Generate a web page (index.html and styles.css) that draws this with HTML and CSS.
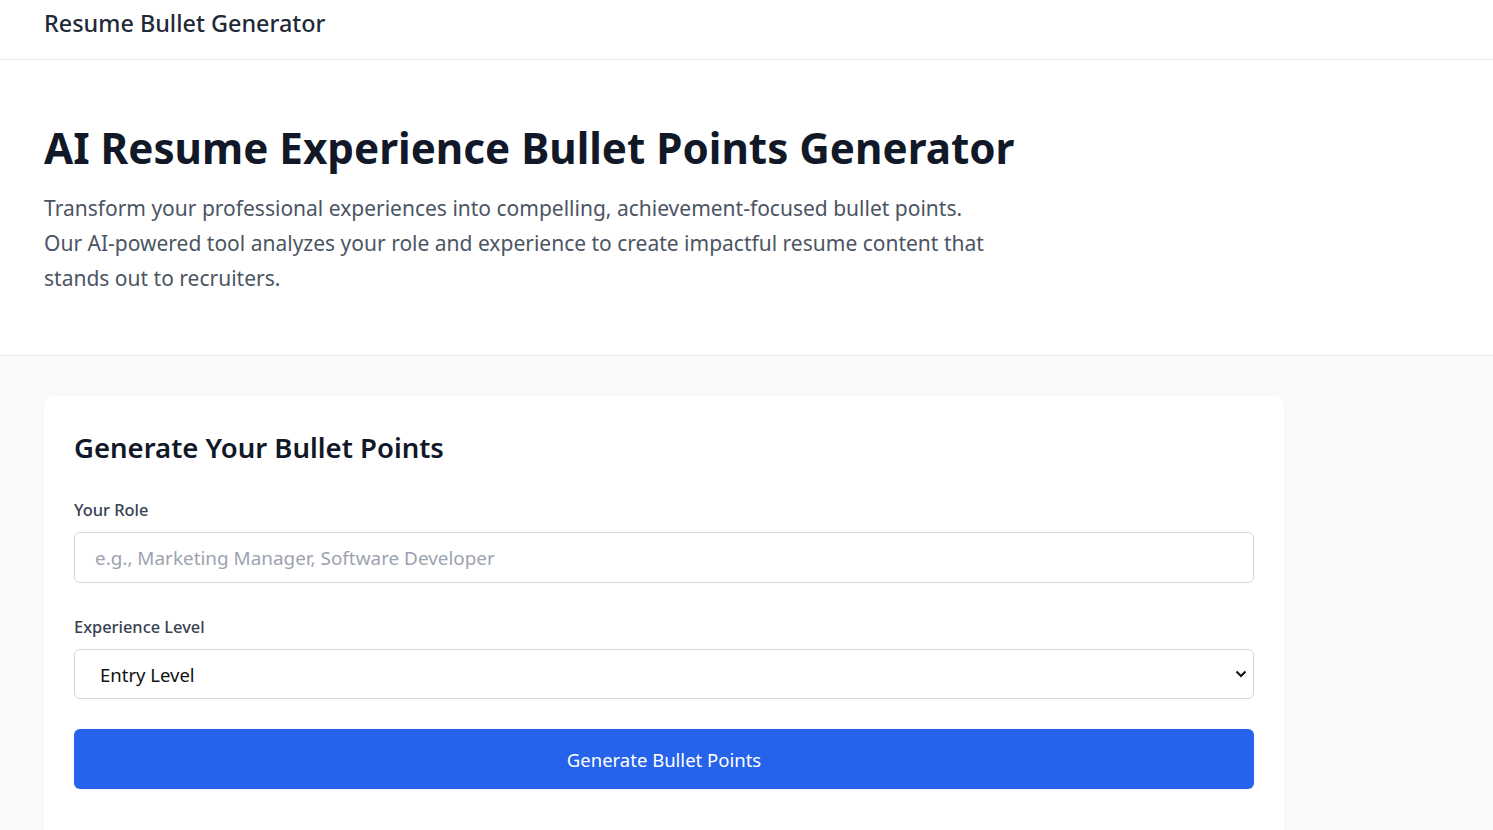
FILE: index.html
```html
<!DOCTYPE html>
<html lang="en">
<head>
<meta charset="utf-8">
<title>Resume Bullet Generator</title>
<link rel="stylesheet" href="styles.css">
</head>
<body>
<header class="topbar">
  <div class="brand">Resume Bullet Generator</div>
</header>
<section class="hero">
  <h1 class="hero-title">AI Resume Experience Bullet Points Generator</h1>
  <p class="hero-text">Transform your professional experiences into compelling, achievement-focused bullet points. Our AI-powered tool analyzes your role and experience to create impactful resume content that stands out to recruiters.</p>
</section>
<main class="main">
  <div class="card">
    <h2 class="card-title">Generate Your Bullet Points</h2>
    <form class="form">
      <div class="field">
        <label class="label" for="role">Your Role</label>
        <input class="input" id="role" type="text" placeholder="e.g., Marketing Manager, Software Developer">
      </div>
      <div class="field">
        <label class="label" for="level">Experience Level</label>
        <div class="select-wrap">
          <select class="select" id="level">
            <option>Entry Level</option>
            <option>Mid Level</option>
            <option>Senior Level</option>
          </select>
          <svg class="chev" viewBox="0 0 12 8" width="12" height="8"><path d="M1.5 1.5 6 6l4.5-4.5" fill="none" stroke="#111" stroke-width="2"/></svg>
        </div>
      </div>
      <button class="btn" type="button">Generate Bullet Points</button>
    </form>
  </div>
</main>
</body>
</html>
```
FILE: styles.css
```css
* { box-sizing: border-box; }
html, body { margin: 0; padding: 0; }
body {
  font-family: "Noto Sans", "Open Sans", sans-serif;
  background: #f9fafb;
  color: #111827;
}
.topbar {
  height: 60px;
  background: #fff;
  border-bottom: 1px solid #e5e7eb;
  padding: 0 44px;
  display: flex;
  align-items: center;
}
.brand {
  font-size: 23.4px;
  font-weight: 500;
  color: #1f2937;
  margin-top: -14px;
}
.hero {
  background: #fff;
  border-bottom: 1px solid #e5e7eb;
  padding: 60px 44px 59px;
}
.hero-title {
  margin: 0;
  font-size: 42.2px;
  font-weight: 700;
  line-height: 56px;
  color: #111827;
}
.hero-text {
  margin: 15px 0 0;
  max-width: 955px;
  font-size: 21px;
  line-height: 35px;
  color: #4b5563;
}
.main {
  padding: 40px 44px;
}
.card {
  width: 1240px;
  background: #fff;
  border-radius: 8px;
  box-shadow: 0 1px 3px rgba(0,0,0,0.04);
  padding: 30px 30px 60px;
}
.card-title {
  margin: 0 0 28px;
  font-size: 27.5px;
  font-weight: 600;
  line-height: 44px;
  color: #111827;
}
.form { display: flex; flex-direction: column; gap: 32px; }
.field { display: flex; flex-direction: column; gap: 10px; }
.label {
  font-size: 16.4px;
  font-weight: 500;
  line-height: 24px;
  color: #374151;
}
.input, .select {
  width: 100%;
  height: 51px;
  border: 1px solid #d1d5db;
  border-radius: 6px;
  background: #fff;
  font-family: inherit;
  font-size: 18.9px;
  padding: 0 20px;
  outline: none;
}
.input::placeholder { color: #9ca3af; }
.select-wrap { position: relative; }
.select {
  appearance: none;
  -webkit-appearance: none;
  height: 50px;
  color: #111;
  font-size: 18.5px;
  padding-left: 25px;
}
.chev {
  position: absolute;
  right: 7px;
  top: 21px;
  pointer-events: none;
}
.btn {
  margin-top: -2px;
  height: 60px;
  width: 100%;
  border: none;
  border-radius: 6px;
  background: #2563eb;
  color: #fff;
  font-family: inherit;
  font-size: 18.5px;
}
```
